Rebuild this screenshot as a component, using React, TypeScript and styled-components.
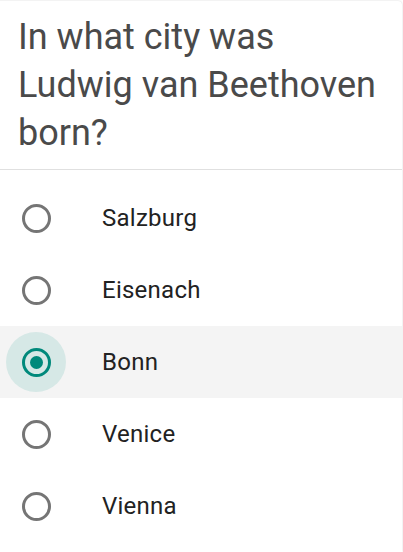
import { useState } from "react";
import styled, { createGlobalStyle } from "styled-components";

const GlobalStyle = createGlobalStyle`
  html, body {
    margin: 0;
    padding: 0;
    background: #ffffff;
  }
  body {
    font-family: Roboto, "Noto Sans", "Liberation Sans", sans-serif;
  }
`;

const Card = styled.div`
  margin: 1px 1px 0 -4px;
  background: #ffffff;
  border-radius: 4px 4px 0 0;
  box-shadow: 0 0 2px rgba(0, 0, 0, 0.18);
  min-height: 551px;
`;

const Question = styled.h1`
  margin: 0;
  padding: 12px 16px 12px 22px;
  font-size: 36px;
  line-height: 48px;
  font-weight: 400;
  color: #4a4a4a;
  border-bottom: 1px solid #e0e0e0;
`;

const Options = styled.ul`
  list-style: none;
  margin: 0;
  padding: 12px 0 0;
`;

const Option = styled.li<{ $selected: boolean }>`
  height: 72px;
  display: flex;
  align-items: center;
  padding-left: 10px;
  background: ${(p) => (p.$selected ? "#f4f4f4" : "transparent")};
  cursor: pointer;
`;

const Halo = styled.span<{ $selected: boolean }>`
  width: 60px;
  height: 60px;
  border-radius: 50%;
  display: flex;
  align-items: center;
  justify-content: center;
  background: ${(p) => (p.$selected ? "#d6e8e6" : "transparent")};
`;

const Ring = styled.span<{ $selected: boolean }>`
  box-sizing: border-box;
  width: 29px;
  height: 29px;
  border-radius: 50%;
  border: 3px solid ${(p) => (p.$selected ? "#00897b" : "#757575")};
  display: flex;
  align-items: center;
  justify-content: center;
`;

const Dot = styled.span`
  width: 13px;
  height: 13px;
  border-radius: 50%;
  background: #00897b;
`;

const Label = styled.span`
  margin-left: 36px;
  font-size: 24px;
  letter-spacing: 0.25px;
  color: #222222;
`;

const answers = ["Salzburg", "Eisenach", "Bonn", "Venice", "Vienna"];

const App: React.FC = () => {
  const [selected, setSelected] = useState<string>("Bonn");

  return (
    <>
      <GlobalStyle />
      <Card>
        <Question>In what city was Ludwig van Beethoven born?</Question>
        <Options>
          {answers.map((answer) => {
            const isSelected = answer === selected;
            return (
              <Option
                key={answer}
                $selected={isSelected}
                onClick={() => setSelected(answer)}
              >
                <Halo $selected={isSelected}>
                  <Ring $selected={isSelected}>{isSelected && <Dot />}</Ring>
                </Halo>
                <Label>{answer}</Label>
              </Option>
            );
          })}
        </Options>
      </Card>
    </>
  );
};

export default App;
